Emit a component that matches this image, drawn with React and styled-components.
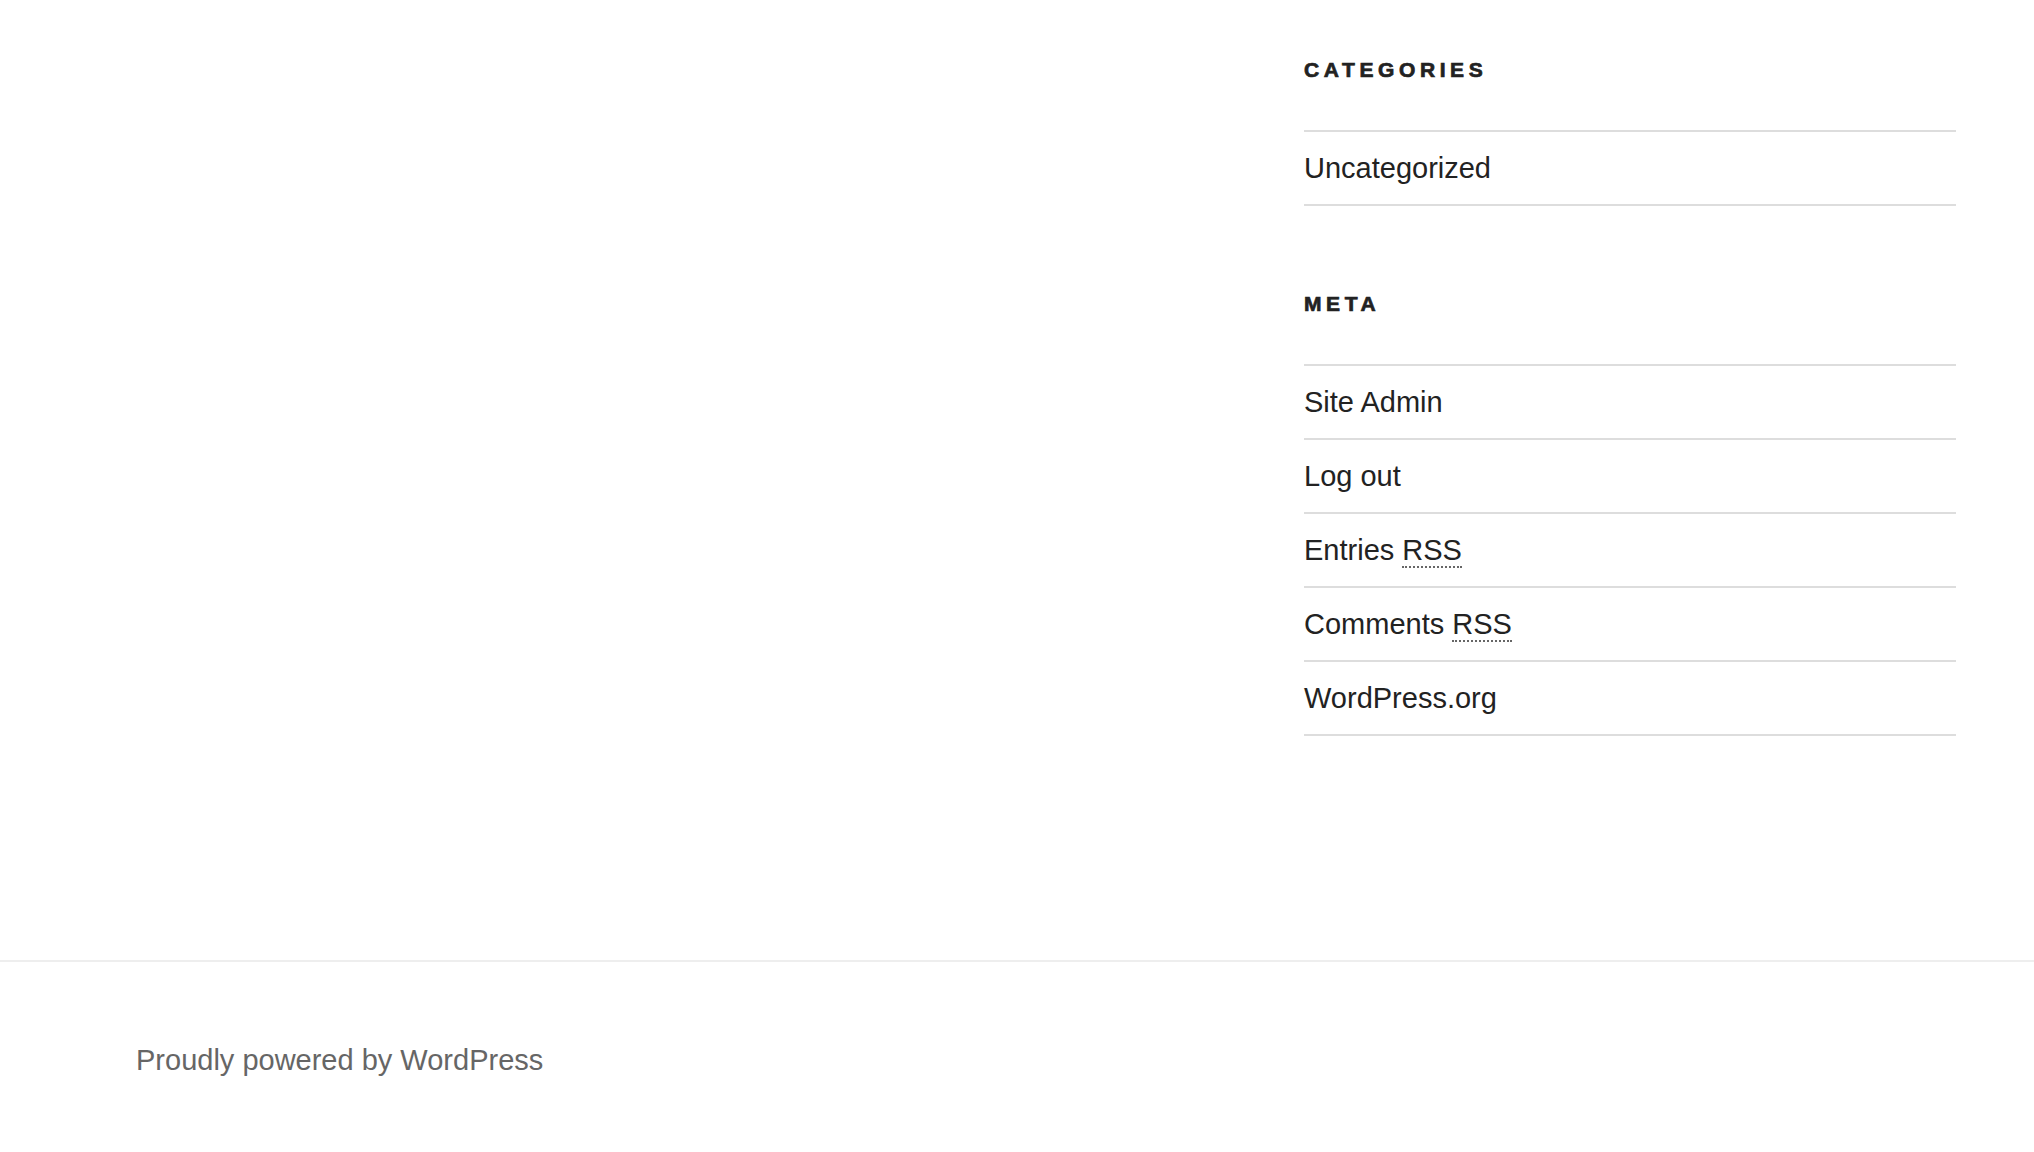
import React from 'react';
import styled, { createGlobalStyle } from 'styled-components';

const GlobalStyle = createGlobalStyle`
  html, body {
    margin: 0;
    padding: 0;
    background: #fff;
  }
  body {
    font-family: "Liberation Sans", Arial, sans-serif;
    color: #222;
  }
`;

const Page = styled.div`
  display: flex;
  flex-direction: column;
  min-height: 1152px;
`;

const Main = styled.div`
  display: flex;
  justify-content: flex-end;
  padding: 59px 78px 224px 0;
`;

const Sidebar = styled.aside`
  width: 652px;
  display: flex;
  flex-direction: column;
`;

const Widget = styled.section`
  margin-bottom: ${(p) => p.$gap || 0}px;
`;

const WidgetTitle = styled.h2`
  margin: 0 0 50px;
  font-size: 21px;
  line-height: 21px;
  font-weight: 700;
  letter-spacing: 4.6px;
  text-transform: uppercase;
  color: #222;
  -webkit-text-stroke: 0.7px #222;
`;

const List = styled.ul`
  list-style: none;
  margin: 0;
  padding: 0;
  border-bottom: 2px solid #ddd;
`;

const Item = styled.li`
  border-top: 2px solid #ddd;
  height: 72px;
  font-size: 29px;
  line-height: 72px;
`;

const Link = styled.a`
  color: #222;
  text-decoration: none;
`;

const Abbr = styled.abbr`
  text-decoration: none;
  border-bottom: 2px dotted #666;
`;

const Footer = styled.footer`
  border-top: 2px solid #eee;
  padding: 77px 0 0 136px;
  flex: 1;
`;

const SiteInfo = styled.a`
  font-size: 29px;
  line-height: 43.5px;
  color: #666;
  text-decoration: none;
`;

const meta = [
  ['Site Admin'],
  ['Log out'],
  ['Entries ', 'RSS'],
  ['Comments ', 'RSS'],
  ['WordPress.org'],
];

export default function App() {
  return (
    <Page>
      <GlobalStyle />
      <Main>
        <Sidebar>
          <Widget $gap={87}>
            <WidgetTitle>Categories</WidgetTitle>
            <List>
              <Item>
                <Link href="#">Uncategorized</Link>
              </Item>
            </List>
          </Widget>
          <Widget>
            <WidgetTitle>Meta</WidgetTitle>
            <List>
              {meta.map(([label, abbr]) => (
                <Item key={label + (abbr || '')}>
                  <Link href="#">
                    {label}
                    {abbr && <Abbr title="Really Simple Syndication">{abbr}</Abbr>}
                  </Link>
                </Item>
              ))}
            </List>
          </Widget>
        </Sidebar>
      </Main>
      <Footer>
        <SiteInfo href="#">Proudly powered by WordPress</SiteInfo>
      </Footer>
    </Page>
  );
}
